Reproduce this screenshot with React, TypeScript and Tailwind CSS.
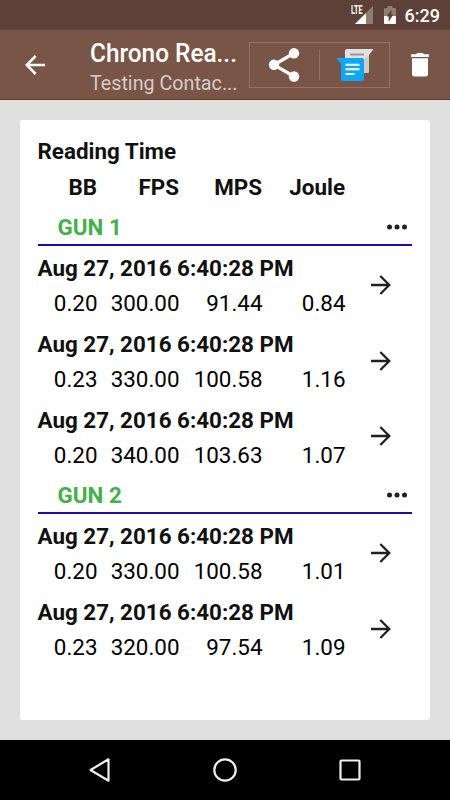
import { clsx } from "clsx";

// ── Data ──────────────────────────────────────────────────────────────

type Reading = {
  time: string;
  bb: string;
  fps: string;
  mps: string;
  joule: string;
};

type Gun = {
  name: string;
  readings: Reading[];
};

const TIME = "Aug 27, 2016 6:40:28 PM";

const GUNS: Gun[] = [
  {
    name: "GUN 1",
    readings: [
      { time: TIME, bb: "0.20", fps: "300.00", mps: "91.44", joule: "0.84" },
      { time: TIME, bb: "0.23", fps: "330.00", mps: "100.58", joule: "1.16" },
      { time: TIME, bb: "0.20", fps: "340.00", mps: "103.63", joule: "1.07" },
    ],
  },
  {
    name: "GUN 2",
    readings: [
      { time: TIME, bb: "0.20", fps: "330.00", mps: "100.58", joule: "1.01" },
      { time: TIME, bb: "0.23", fps: "320.00", mps: "97.54", joule: "1.09" },
    ],
  },
];

// ── Icons ─────────────────────────────────────────────────────────────

function SignalIcon() {
  return (
    <svg width="24" height="20" viewBox="0 0 24 20">
      <path d="M23 1v18H5z" fill="#8f7c76" />
      <path d="M16 8v11H5z" fill="#fff" />
    </svg>
  );
}

function BatteryIcon() {
  return (
    <svg width="12" height="19" viewBox="0 0 12 19">
      <path d="M3.5 0h5v2H11a1 1 0 0 1 1 1v7H0V3a1 1 0 0 1 1-1h2.500z" fill="#8f7c76" />
      <path d="M0 10h12v7a1 1 0 0 1-1 1H1a1 1 0 0 1-1-1z" fill="#fff" />
      <path d="M7.300 3.800v4.800h2L4.700 15.800v-5.300H2.600z" fill="#5d4037" />
    </svg>
  );
}

function ShareIcon() {
  return (
    <svg width="32" height="36" viewBox="0 0 32 36">
      <path d="M26 6.300 6 17.800 26 29.500" fill="none" stroke="#fff" strokeWidth="3.300" />
      <circle cx="26" cy="6.300" r="5.200" fill="#fff" />
      <circle cx="6" cy="17.800" r="5.200" fill="#fff" />
      <circle cx="26" cy="29.500" r="5.200" fill="#fff" />
    </svg>
  );
}

function MessengerIcon() {
  return (
    <svg width="38" height="34" viewBox="0 0 38 34">
      <path d="M11 1h26.500L33 7v16a2 2 0 0 1-2 2H11a2 2 0 0 1-2-2V3a2 2 0 0 1 2-2z" fill="#e2e0df" />
      <path d="m28 11 5-3v15a2 2 0 0 1-2 2h-3z" fill="#cfcbc8" />
      <path d="M14 6.500h14" stroke="#9c9896" strokeWidth="2" />
      <path d="M.500 10H26a2 2 0 0 1 2 2v19a2 2 0 0 1-2 2H7a2 2 0 0 1-2-2V16z" fill="#0da8f5" />
      <path d="M9.500 16.800h14M9.500 21.300h14M9.500 25.900h9" stroke="#fff" strokeWidth="2" />
    </svg>
  );
}

function TrashIcon() {
  return (
    <svg width="18" height="24" viewBox="0 0 18 24">
      <path d="M0 1.300h5L6.200 0h5.600L13 1.300h5V4H0z" fill="#fff" />
      <path d="M1 5.300h16V21a2.500 2.500 0 0 1-2.500 2.500h-11A2.500 2.500 0 0 1 1 21z" fill="#fff" />
    </svg>
  );
}

function ArrowIcon({ back }: { back?: boolean }) {
  return (
    <svg
      width="20"
      height="20"
      viewBox="0 0 20 20"
      fill="none"
      stroke="currentColor"
      strokeWidth={back ? 2.5 : 2.3}
      className={clsx(back && "rotate-180")}
    >
      <path d="M0 10h18M9.300 1l9 9-9 9" />
    </svg>
  );
}

function MoreIcon() {
  return (
    <svg width="20" height="6" viewBox="0 0 20 6" fill="#212121">
      <circle cx="2.500" cy="3" r="2.500" />
      <circle cx="10" cy="3" r="2.500" />
      <circle cx="17.500" cy="3" r="2.500" />
    </svg>
  );
}

// ── Bars ──────────────────────────────────────────────────────────────

function StatusBar() {
  return (
    <div className="flex h-[30px] shrink-0 items-start justify-end bg-[#5d4037] pr-2.5 text-white">
      <span className="-mr-[15px] mt-[5px] w-[14px] origin-left scale-x-[0.6] text-[12px] leading-[11px] font-bold">
        LTE
      </span>
      <div className="mt-[5px]">
        <SignalIcon />
      </div>
      <div className="mt-1.5 ml-[10px]">
        <BatteryIcon />
      </div>
      <span className="ml-[9px] text-[18px] leading-[32px] font-medium">6:29</span>
    </div>
  );
}

function AppBar() {
  return (
    <header className="flex h-[70px] shrink-0 items-center border-b border-[#6b3413] bg-[#795548] text-white">
      <button className="ml-[25px] w-5 shrink-0">
        <ArrowIcon back />
      </button>
      <div className="ml-[45px] w-[158px] shrink-0 pt-1.5">
        <h1 className="origin-left scale-x-[0.975] text-[25px] leading-[31px] font-medium whitespace-nowrap">
          Chrono Rea...
        </h1>
        <p className="origin-left scale-x-[0.985] text-[20px] leading-[29px] whitespace-nowrap text-[#d7ccc8]">
          Testing Contac...
        </p>
      </div>
      <div className="ml-px flex h-[46px] w-[141px] shrink-0 items-center border border-[#947065]">
        <button className="ml-[18px]">
          <ShareIcon />
        </button>
        <div className="ml-[19px] h-[30px] w-px bg-[#947065]" />
        <button className="ml-4">
          <MessengerIcon />
        </button>
      </div>
      <button className="ml-[21px]">
        <TrashIcon />
      </button>
    </header>
  );
}

function NavBar() {
  return (
    <nav className="flex h-[60px] shrink-0 items-center justify-center gap-[101px] bg-black">
      <svg width="24" height="24" viewBox="0 0 24 24" fill="none" stroke="#eee" strokeWidth="2.200" strokeLinejoin="round">
        <path d="M20.500 1.300v21.400L2.500 12z" />
      </svg>
      <svg width="24" height="24" viewBox="0 0 24 24" fill="none" stroke="#eee" strokeWidth="2.200">
        <circle cx="12" cy="12" r="10.700" />
      </svg>
      <svg width="24" height="24" viewBox="0 0 24 24" fill="none" stroke="#eee" strokeWidth="2.200">
        <rect x="2.500" y="2.500" width="19" height="19" rx="1" />
      </svg>
    </nav>
  );
}

// ── Readings ──────────────────────────────────────────────────────────

function Columns({ values, header }: { values: string[]; header?: boolean }) {
  return (
    <div
      className={clsx(
        "grid text-right",
        header
          ? "-mb-px w-[307.500px] grid-cols-[59.500px_82px_83px_83px] leading-[36px] font-bold text-[#111]"
          : "w-[308px] grid-cols-[60px_82px_83px_83px] leading-[35px]"
      )}
    >
      {values.map(value => (
        <span key={value}>{value}</span>
      ))}
    </div>
  );
}

function GunSection({ gun }: { gun: Gun }) {
  return (
    <section>
      <div className="mr-px mb-px flex h-[42px] items-center justify-between border-b-2 border-[#1a0dab] pt-1.5 pr-[5px] pl-5">
        <h2 className="leading-[35px] font-bold text-[#43b049]">{gun.name}</h2>
        <button className="pb-px">
          <MoreIcon />
        </button>
      </div>
      <div className="flex flex-col gap-0.5">
        {gun.readings.map((reading, i) => (
          <div key={i} className="flex h-[73.800px] items-center pt-1">
            <div className="w-[333px]">
              <p className="leading-[35px] font-bold text-[#111]">{reading.time}</p>
              <Columns values={[reading.bb, reading.fps, reading.mps, reading.joule]} />
            </div>
            <button className="pb-0.5 text-[#212121]">
              <ArrowIcon />
            </button>
          </div>
        ))}
      </div>
    </section>
  );
}

export default function App() {
  return (
    <div className="flex h-[800px] w-[450px] flex-col overflow-hidden bg-[#e0e0e0] font-[Roboto,sans-serif]">
      <StatusBar />
      <AppBar />
      <main className="flex-1 p-5">
        <div className="h-full rounded-[3px] bg-white px-[17.500px] pt-[14px] text-[22.400px] text-black">
          <p className="leading-[35px] font-bold text-[#111]">Reading Time</p>
          <Columns header values={["BB", "FPS", "MPS", "Joule"]} />
          {GUNS.map(gun => (
            <GunSection key={gun.name} gun={gun} />
          ))}
        </div>
      </main>
      <NavBar />
    </div>
  );
}
